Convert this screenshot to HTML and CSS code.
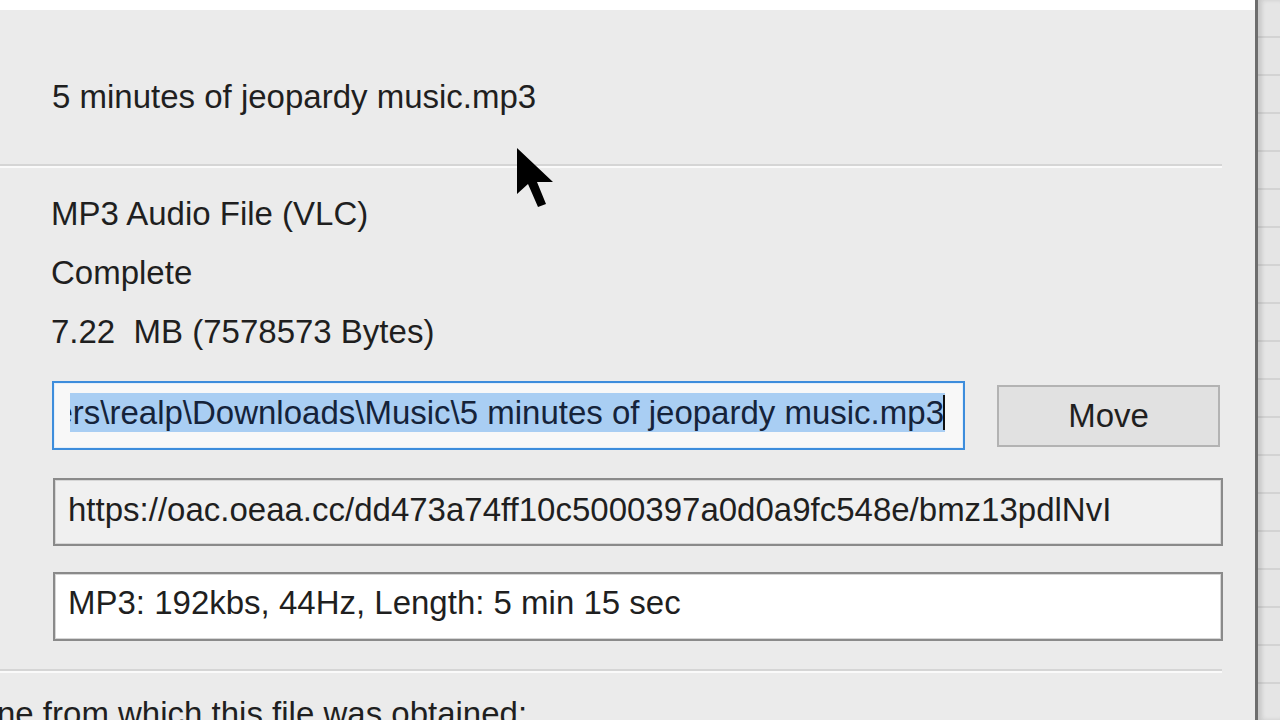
FILE: index.html
```html
<!DOCTYPE html>
<html lang="en">
  <head>
    <meta charset="utf-8" />
    <title>File properties</title>
    <link rel="stylesheet" href="styles.css">
  </head>
  <body>
    <div class="screen">
      <!-- Properties dialog -->
      <div class="dialog">
        <div class="dialog__top"></div>
        <div class="dialog__body">
          <p class="name">5 minutes of jeopardy music.mp3</p>
          <div class="sep"></div>

          <ul class="props">
            <li>MP3 Audio File (VLC)</li>
            <li>Complete</li>
            <li>7.22&nbsp; MB (7578573 Bytes)</li>
          </ul>

          <div class="path-row">
            <div class="path">
              <div class="path__inner">
                <span class="path__sel">C:\Users\realp\Downloads\Music\5 minutes of jeopardy music.mp3</span>
              </div>
            </div>
            <button class="btn" type="button">Move</button>
          </div>

          <div class="field field--ro">https://oac.oeaa.cc/dd473a74ff10c5000397a0d0a9fc548e/bmz13pdlNvI</div>
          <div class="field field--info">MP3: 192kbs, 44Hz, Length: 5 min 15 sec</div>

          <div class="sep sep--low"></div>
          <p class="source">ne from which this file was obtained:</p>
        </div>

        <!-- mouse pointer -->
        <svg class="pointer" width="40" height="64" viewBox="0 0 40 64">
          <path d="M1 1 L1 47 L12 37 L22 60 L30 57 L21 35 L37 35 Z" fill="#000" />
        </svg>
      </div>

      <!-- Window behind the dialog -->
      <div class="backdrop"></div>
    </div>
  </body>
</html>
```

FILE: styles.css
```css
/* Base */
html, body { margin: 0; height: 100%; }
body {
  font-family: "Liberation Sans", Arial, sans-serif;
  font-size: 33px;
  color: #1f1f1f;
  background-color: #ebebeb;
  overflow: hidden;
}
p { margin: 0; }

/* Layout */
.screen {
  display: flex;
  height: 720px;
}
.dialog {
  flex: 1;
  position: relative;
  overflow: hidden;
  background-color: #ebebeb;
}
.dialog__top {
  height: 10px;
  background-color: #fff;
}
.dialog__body {
  padding-top: 67px;
}
.backdrop {
  width: 22px;
  border-left: 3px solid #6d6d6d;
  background: repeating-linear-gradient(to bottom, #e5e5e5 0 36px, #d3d3d3 36px 38px);
  box-shadow: inset 4px 0 4px rgba(0, 0, 0, 0.12);
}

/* Text rows */
.name {
  margin-left: 52px;
  line-height: 40px;
}
.sep {
  width: 1222px;
  height: 2px;
  margin-top: 47px;
  background-color: #d5d5d5;
  border-bottom: 2px solid #fafafa;
}
.sep--low { margin-top: 28px; }
.props {
  list-style: none;
  margin: 26px 0 0 51px;
  padding: 0;
  display: flex;
  flex-direction: column;
  gap: 19px;
  line-height: 40px;
}

/* Path input + button */
.path-row {
  display: flex;
  align-items: center;
  margin: 29px 0 0 52px;
}
.path {
  width: 913px;
  height: 69px;
  box-sizing: border-box;
  border: 2px solid #3d8ddc;
  box-shadow: inset 0 0 0 1px #e4effa;
  background-color: #f8f8f8;
  padding: 0 18px 7px 16px;
  display: flex;
  align-items: center;
}
.path__inner {
  flex: 1;
  display: flex;
  justify-content: flex-end;
  overflow: hidden;
}
.path__sel {
  flex-shrink: 0;
  white-space: nowrap;
  line-height: 39px;
  padding-right: 1px;
  background-color: #a9cef3;
  color: #15233a;
  position: relative;
}
.path__sel::after {
  content: "";
  position: absolute;
  right: 0;
  top: 2px;
  width: 2px;
  height: 35px;
  background-color: #111;
}
.btn {
  margin-left: 32px;
  width: 223px;
  height: 62px;
  border: 2px solid #b3b3b3;
  background-color: #e1e1e1;
  font: inherit;
  color: #1f1f1f;
  padding: 0;
}

/* Read-only boxes */
.field {
  width: 1170px;
  height: 68px;
  box-sizing: border-box;
  margin: 28px 0 0 53px;
  padding: 0 0 4px 13px;
  border: 2px solid #8a8a8a;
  box-shadow: inset 0 0 0 1px #d6d6d6;
  display: flex;
  align-items: center;
  line-height: 40px;
  white-space: nowrap;
}
.field--ro { background-color: #f0f0f0; }
.field--info {
  margin-top: 26px;
  height: 69px;
  padding-bottom: 7px;
  background-color: #fff;
}
.source {
  margin: 21px 0 0 -3px;
  line-height: 40px;
  white-space: nowrap;
}

/* Pointer */
.pointer {
  position: absolute;
  left: 516px;
  top: 147px;
}
```
